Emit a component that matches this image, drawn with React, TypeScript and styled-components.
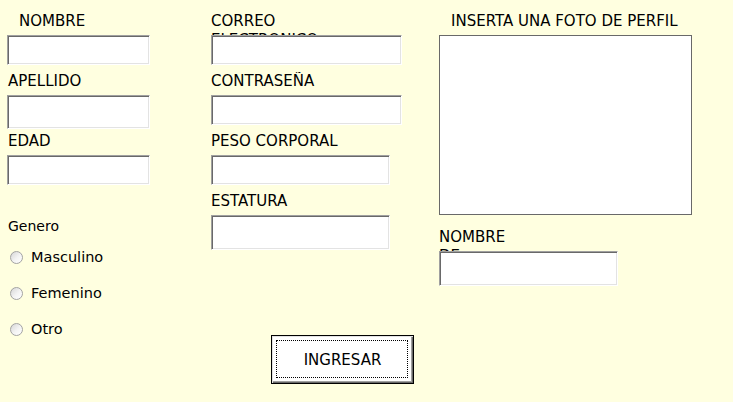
import { memo } from 'react';
import styled, { createGlobalStyle } from 'styled-components';

const GlobalStyle = createGlobalStyle`
  html, body {
    margin: 0;
    padding: 0;
    background-color: #ffffe0;
  }
  body {
    font-family: 'DejaVu Sans', Tahoma, sans-serif;
    color: #000;
  }
`;

const StyledForm = styled.form`
  width: 733px;
  height: 402px;
  background-color: #ffffe0;
  display: flex;
  padding: 12px 0 0 7px;
  box-sizing: border-box;
  overflow: hidden;
`;
const StyledColumn = styled.div<{ $width?: number }>`
  display: flex;
  flex-direction: column;
  width: ${(p) => (p.$width ? `${p.$width}px` : 'auto')};
  flex-shrink: 0;
`;
const StyledField = styled.div`
  height: 60px;
  display: flex;
  flex-direction: column;
`;
const StyledLabel = styled.label<{ $indent?: number; $width?: number }>`
  display: block;
  width: ${(p) => (p.$width ? `${p.$width}px` : 'auto')};
  height: 23px;
  overflow: hidden;
  font-size: 15px;
  line-height: 19px;
  padding-left: ${(p) => p.$indent || 0}px;
`;
const StyledInput = styled.input<{ $w: number; $h: number }>`
  width: ${(p) => p.$w}px;
  height: ${(p) => p.$h}px;
  box-sizing: border-box;
  margin: 0;
  padding: 2px 4px;
  font-family: inherit;
  font-size: 14px;
  background-color: #fff;
  border: 1px solid;
  border-color: #a0a0a0 #fff #fff #a0a0a0;
  box-shadow: inset 1px 1px #696969, inset -1px -1px #e3e3e3;
  outline: none;
`;
const StyledGroupTitle = styled.div`
  margin-top: 25px;
  font-size: 14px;
  line-height: 18px;
  padding-left: 1px;
`;
const StyledRadios = styled.div`
  display: flex;
  flex-direction: column;
  gap: 16px;
  margin-top: 12px;
  padding-left: 3px;
`;
const StyledRadioRow = styled.label`
  display: flex;
  align-items: center;
  gap: 8px;
  height: 20px;
  font-size: 14.5px;
`;
const StyledRadioDot = styled.input`
  appearance: none;
  margin: 0;
  width: 13px;
  height: 13px;
  border-radius: 50%;
  border: 1px solid #a3a3a3;
  box-sizing: border-box;
  background: linear-gradient(135deg, #d6d6d6 0%, #f4f4f4 55%, #ffffff 100%);
`;
const StyledButton = styled.button`
  position: relative;
  margin: 83px 0 0 60px;
  width: 143px;
  height: 49px;
  box-sizing: border-box;
  background-color: #fff;
  border: 1px solid #000;
  box-shadow: inset 1px 1px #e3e3e3, inset -1px -1px #696969, inset -2px -2px #a0a0a0;
  font-family: inherit;
  font-size: 15px;
  color: #000;
  padding: 0;
  cursor: pointer;
  &::after {
    content: '';
    position: absolute;
    inset: 4px 5px 5px 4px;
    border: 1px dotted #000;
  }
`;
const StyledPicture = styled.div`
  width: 253px;
  height: 180px;
  box-sizing: border-box;
  background-color: #fff;
  border: 1px solid #696969;
`;
const StyledSpacer = styled.div<{ $h: number }>`
  height: ${(p) => p.$h}px;
`;

const fieldsLeft = [
  { label: 'NOMBRE', indent: 12, w: 143, h: 30 },
  { label: 'APELLIDO', indent: 1, w: 143, h: 34 },
  { label: 'EDAD', indent: 1, w: 143, h: 30 },
];
const fieldsMid = [
  { label: 'CORREO ELECTRONICO', w: 191, h: 30 },
  { label: 'CONTRASEÑA', w: 191, h: 30 },
  { label: 'PESO CORPORAL', w: 179, h: 30 },
  { label: 'ESTATURA', w: 179, h: 35 },
];
const genders = ['Masculino', 'Femenino', 'Otro'];

const App = () => {
  return (
    <>
      <GlobalStyle />
      <StyledForm onSubmit={(e) => e.preventDefault()}>
        <StyledColumn $width={204}>
          {fieldsLeft.map((f) => (
            <StyledField key={f.label}>
              <StyledLabel $indent={f.indent}>{f.label}</StyledLabel>
              <StyledInput $w={f.w} $h={f.h} />
            </StyledField>
          ))}
          <StyledGroupTitle>Genero</StyledGroupTitle>
          <StyledRadios>
            {genders.map((g) => (
              <StyledRadioRow key={g}>
                <StyledRadioDot type="radio" name="genero" />
                {g}
              </StyledRadioRow>
            ))}
          </StyledRadios>
        </StyledColumn>
        <StyledColumn $width={228}>
          {fieldsMid.map((f) => (
            <StyledField key={f.label}>
              <StyledLabel $width={130}>{f.label}</StyledLabel>
              <StyledInput $w={f.w} $h={f.h} />
            </StyledField>
          ))}
          <StyledButton type="submit">INGRESAR</StyledButton>
        </StyledColumn>
        <StyledColumn>
          <StyledLabel $indent={12}>INSERTA UNA FOTO DE PERFIL</StyledLabel>
          <StyledPicture />
          <StyledSpacer $h={13} />
          <StyledLabel $width={80}>NOMBRE DE USUARIO</StyledLabel>
          <StyledInput $w={179} $h={35} />
        </StyledColumn>
      </StyledForm>
    </>
  );
};

export default memo(App);
